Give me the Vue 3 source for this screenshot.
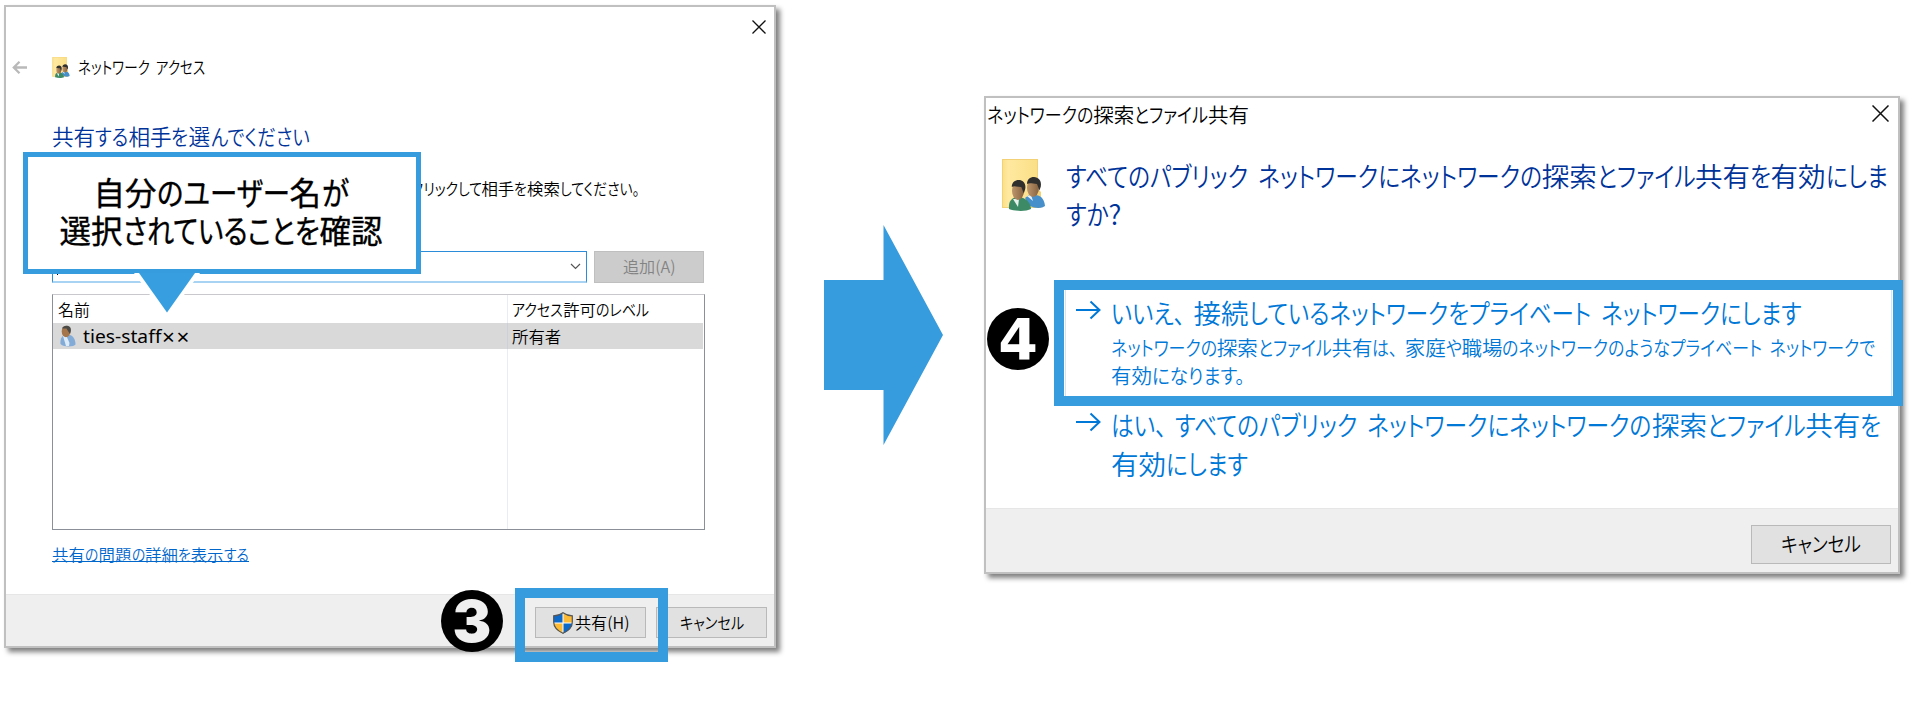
<script setup>
import { defineComponent, h, ref, onMounted } from 'vue'

/* One line of Japanese UI text: kana runs are condensed so that the line takes `w` pixels,
   while kanji keep their full width. */
const Line = defineComponent({
  props: { t: String, w: Number },
  setup(props) {
    const runs = props.t.match(/[\u3041-\u30ff\u3002 ]+\u3001?|[^\u3041-\u30ff\u3001\u3002 ]+/g) || []
    const isKana = (s) => /[\u3041-\u30ff\u3001\u3002 ]/.test(s[0])
    const root = ref(null)
    const sizes = ref([])
    onMounted(() => {
      const widths = [...root.value.querySelectorAll('.ink')].map((e) => e.offsetWidth)
      let kana = 0
      let other = 0
      runs.forEach((r, i) => (isKana(r) ? (kana += widths[i]) : (other += widths[i])))
      const k = kana ? (props.w - other) / kana : 1
      const o = kana ? 1 : props.w / other
      sizes.value = runs.map((r, i) => {
        const s = isKana(r) ? k : o
        return { w: widths[i] * s, s }
      })
    })
    return () =>
      h('span', { class: 'line', ref: root }, runs.map((r, i) => {
        const z = sizes.value[i]
        return h('span', { class: 'run', style: z ? { width: z.w + 'px' } : {} }, [
          h('span', {
            class: ['ink', isKana(r) && 'kana', r.endsWith('\u3001') && 'comma'],
            style: z ? { transform: `scaleX(${z.s})` } : {},
          }, r),
        ])
      }))
  },
})
</script>

<template>
  <main class="stage">
    <section class="dialog access">
      <svg class="close" width="14" height="14" viewBox="0 0 14 14"><path d="M.5 .5l13 13M13.5 .5l-13 13" stroke="#111" stroke-width="1.3" /></svg>
      <div class="nav">
        <svg width="15" height="13" viewBox="0 0 15 13"><path d="M15 6.5H2M7.500 .8L1.800 6.500l5.700 5.700" fill="none" stroke="#b9b9b9" stroke-width="2.300" /></svg>
        <svg class="folder" width="18" height="21" viewBox="0 0 43 52"><use href="#people" /></svg>
        <Line t="ネットワーク アクセス" :w="127" />
      </div>
      <h1><Line t="共有する相手を選んでください" :w="257" /></h1>
      <p class="hint"><Line t="クリックして相手を検索してください。" :w="229" /></p>
      <div class="entry">
        <div class="combo">
          <i class="caret"></i>
          <svg width="11" height="7" viewBox="0 0 11 7"><path d="M1 1l4.5 4.5L10 1" fill="none" stroke="#555" stroke-width="1.2" /></svg>
        </div>
        <div class="btn add"><Line t="追加(A)" :w="53" /></div>
      </div>
      <div class="list">
        <div class="row head"><span class="name"><Line t="名前" :w="32" /></span><span class="level"><Line t="アクセス許可のレベル" :w="137" /></span></div>
        <div class="row user">
          <span class="name">
            <svg class="avatar" width="16" height="22" viewBox="0 0 16 22">
              <path d="M0.5 19C0 13.500 2 10.500 5.500 10h4.500c3.500 1 5.500 5 5.500 9.500-1.500 2.500-11.500 3-15-.5z" fill="#83abd8" />
              <path d="M3 11l3-1 3.500 8L9 21H6z" fill="#dcebf7" />
              <ellipse cx="6" cy="6.500" rx="4.300" ry="5.700" fill="#a5764c" />
              <path d="M2 3.500C3 .3 8 .2 10 2c1.500 2 1 4.500 0 7L8 6 6.500 3.600z" fill="#4b4a46" />
            </svg>
            <span class="latin"><Line t="ties-staff" :w="78" /></span><span class="marks">××</span>
          </span>
          <span class="level"><Line t="所有者" :w="49" /></span>
        </div>
        <div class="row rest"><span class="name"></span><span class="level"></span></div>
      </div>
      <a class="link"><Line t="共有の問題の詳細を表示する" :w="197" /></a>
      <footer>
        <div class="btn share">
          <svg width="20" height="22" viewBox="0 0 20 22">
            <path d="M10 .5C7 2.700 4 3.500.7 3.600V10c0 5 4.300 9 9.300 11.500z" fill="#0d69c9" />
            <path d="M10 .5c3 2.200 6 3 9.300 3.100V10c0 5-4.300 9-9.300 11.500z" fill="#fdbb35" />
            <path d="M.7 11H10v10.500C5 19.500 1.200 16 .7 11z" fill="#fdbb35" />
            <path d="M10 11h9.300c-.5 5-4.300 8.500-9.300 10.500z" fill="#0d69c9" />
            <path d="M10 1v20M1 11h18" stroke="#fff" stroke-width="1" />
            <path d="M10 .7C7 2.900 4 3.700.7 3.800V10c0 5 4.300 9 9.300 11.300 5-2.300 9.300-6.300 9.300-11.300V3.800C16 3.700 13 2.900 10 .7z" fill="none" stroke="#555" stroke-width="1.200" />
          </svg>
          <Line t="共有(H)" :w="54" />
        </div>
        <div class="btn"><Line t="キャンセル" :w="64" /></div>
      </footer>
    </section>

    <svg class="big-arrow" width="119" height="220" viewBox="0 0 119 220"><path d="M0 55h59.500V0L119 110 59.500 220V165H0z" fill="#379cdd" /></svg>

    <section class="dialog discovery">
      <header>
        <Line t="ネットワークの探索とファイル共有" :w="262" />
        <svg width="17" height="17" viewBox="0 0 17 17"><path d="M.5 .5l16 16M16.500 .5l-16 16" stroke="#111" stroke-width="1.500" /></svg>
      </header>
      <div class="question">
        <svg width="43" height="52" viewBox="0 0 43 52">
          <defs>
            <linearGradient id="paper" x1="0" x2="1"><stop offset="0" stop-color="#fbe08a" /><stop offset=".15" stop-color="#ffe9a0" /><stop offset="1" stop-color="#fbdf87" /></linearGradient>
            <linearGradient id="skin" x1="0" x2="1"><stop offset="0" stop-color="#bd966d" /><stop offset="1" stop-color="#87623f" /></linearGradient>
            <g id="people">
              <path d="M0 0h36v30l3 3v16H0z" fill="#f3d277" />
              <path d="M1 1h34v47H1z" fill="url(#paper)" />
              <path d="M23 39c3-3 6-4 11-3 6 1 8.500 5 9 11-3 2.500-10 2.500-15 0z" fill="#468fca" />
              <path d="M25 37l4-1 2 6z" fill="#e8f1f7" />
              <ellipse cx="31" cy="29" rx="6" ry="9" fill="url(#skin)" />
              <path d="M25 25c0-4.500 3-7 7-7s8 3.500 6.800 9.500l-1.300 4-2.500-6.500c-4 0-7-1.500-10 0z" fill="#302f2e" />
              <path d="M7 50c-.5-7 1.500-10 6-11.500h6C25 39.500 28.500 44 29 50c-5 2.500-15 2.500-22 0z" fill="#3c8b66" />
              <path d="M11 40l6 0-1 8z" fill="#e8f1ec" />
              <ellipse cx="16" cy="32" rx="6" ry="9" fill="url(#skin)" />
              <path d="M9.800 28c0-4.500 3-7 7-7s7.800 3.500 6.300 9.500l-1.300 4-2.500-6.500c-4 0-7-1.500-9.500 0z" fill="#302f2e" />
            </g>
          </defs>
          <use href="#people" />
        </svg>
        <h2><Line t="すべてのパブリック ネットワークにネットワークの探索とファイル共有を有効にしま" :w="822" /><Line t="すか?" :w="56" /></h2>
      </div>
      <div class="option first">
        <svg width="25" height="20" viewBox="0 0 25 20"><path d="M0 10h23M14.500 1.500L23.500 10l-9 8.500" fill="none" stroke="#0078d7" stroke-width="2" /></svg>
        <div>
          <div class="answer"><Line t="いいえ、接続しているネットワークをプライベート ネットワークにします" :w="690" /></div>
          <div class="detail"><Line t="ネットワークの探索とファイル共有は、家庭や職場のネットワークのようなプライベート ネットワークで" :w="764.5" /><Line t="有効になります。" :w="134" /></div>
        </div>
      </div>
      <div class="option second">
        <svg width="25" height="20" viewBox="0 0 25 20"><path d="M0 10h23M14.500 1.500L23.500 10l-9 8.500" fill="none" stroke="#0078d7" stroke-width="2" /></svg>
        <div class="answer"><Line t="はい、すべてのパブリック ネットワークにネットワークの探索とファイル共有を" :w="770" /><Line t="有効にします" :w="137" /></div>
      </div>
      <footer><div class="btn"><Line t="キャンセル" :w="80" /></div></footer>
    </section>

    <div class="callout">
      <Line t="自分のユーザー名が" :w="255" />
      <Line t="選択されていることを確認" :w="323" />
      <svg class="tail" width="68" height="46" viewBox="0 0 68 46"><path d="M1 0h66L38 40H30z" fill="#fff" /><path d="M6 0h56L34 39.500z" fill="#379fe0" /></svg>
    </div>
    <div class="frame share-frame"></div>
    <div class="frame option-frame"></div>
    <div class="badge three"><b>3</b></div>
    <div class="badge four"><b>4</b></div>
  </main>
</template>

<style>
body { background: #fff; }
.line { display: block; white-space: pre; }
.line .run { display: inline-block; }
.line .ink { display: inline-block; transform-origin: 0 50%; }
.line .kana { font-feature-settings: "palt"; word-spacing: .22em; }
.line .comma { padding-right: .38em; }
</style>

<style scoped>
.stage {
  position: relative;
  display: flex;
  align-items: flex-start;
  width: 1912px;
  height: 704px;
  overflow: hidden;
  background: #fff;
  color: #000;
  font-family: "Noto Sans CJK JP", sans-serif;
  font-weight: 350;
}
h1, h2, p { margin: 0; font-weight: 350; }
svg { display: block; flex: none; }
.line { position: relative; top: -.056em; }
.dialog {
  box-sizing: border-box;
  flex: none;
  display: flex;
  flex-direction: column;
  align-items: flex-start;
  border: 2px solid #c0c0c0;
  background: #fff;
  box-shadow: 4px 4px 5px #808080;
}
footer {
  box-sizing: border-box;
  align-self: stretch;
  margin-top: auto;
  display: flex;
  justify-content: flex-end;
  background: #efefef;
  border-top: 1px solid #e6e6e6;
}
.btn {
  box-sizing: border-box;
  display: flex;
  align-items: center;
  justify-content: center;
  background: #e1e1e1;
  border: 1px solid #b9b9b9;
}

.access { width: 772px; height: 643px; margin: 5px 0 0 4px; font-size: 16.4px; line-height: 22px; }
.close { align-self: flex-end; margin: 13px 8px 0 0; }
.nav { display: flex; align-items: center; height: 22px; margin-top: 22px; padding-left: 6px; font-size: 17px; }
.nav .line { top: 0; }
.folder { margin: 0 8px 0 25px; }
h1 { margin: 44px 0 0 46px; font-size: 21.6px; line-height: 30px; color: #003399; }
.hint { margin: 25px 0 0 404.500px; line-height: 24px; }
.entry { display: flex; gap: 7px; margin: 50px 0 0 46px; }
.combo {
  box-sizing: border-box;
  display: flex;
  align-items: center;
  justify-content: space-between;
  width: 535px;
  height: 32px;
  padding: 0 5px 0 4px;
  border: 1px solid #2b8dd9;
  border-bottom: 2px solid #a9d3f2;
}
.caret { width: 1px; height: 17px; background: #000; }
.add { width: 110px; height: 32px; background: #ccc; border-color: #bfbfbf; color: #838383; }
.list {
  box-sizing: border-box;
  display: flex;
  flex-direction: column;
  width: 653px;
  height: 236px;
  margin: 11px 0 0 46px;
  border: 1px solid #8a8f98;
  border-top-color: #c8c8cd;
}
.row { display: flex; align-items: stretch; }
.row > span { display: flex; align-items: center; }
.name { box-sizing: border-box; width: 455px; padding-left: 5px; border-right: 1px solid #e9edf3; }
.level { padding-left: 4px; }
.head { height: 28px; }
.head > span { padding-top: 1px; }
.user { height: 26px; margin-right: 1px; background: #d9d9d9; }
.user .name { border-color: #cdd0d6; padding-left: 7px; }
.user .level { padding-top: 2px; }
.rest { flex: 1; }
.latin { margin: 3px 0 0 7px; font: 400 18.5px/26px "Noto Sans", sans-serif; }
.marks { margin: 2px 0 0 1px; font: 400 22.500px/26px "Noto Sans", sans-serif; letter-spacing: 1.700px; }
.link { margin: 14px 0 0 46px; color: #0066cc; }
.link > * { border-bottom: 1px solid #0066cc; height: 18px; line-height: 22px; }
.access footer { height: 52px; padding: 12px 7px 0 0; gap: 10px; }
.access footer .btn { width: 111px; height: 31px; }
.share { gap: 2px; }

.big-arrow { margin: 225px 0 0 48px; }

.discovery { width: 916px; height: 478px; margin: 96px 0 0 41px; font-size: 20.5px; line-height: 28px; }
header { align-self: stretch; display: flex; align-items: flex-start; justify-content: space-between; padding: 3px 9px 0 1px; }
header svg { margin-top: 4px; }
.question { display: flex; margin-top: 29px; padding-left: 16px; gap: 20.500px; }
.question svg { margin-top: 1px; }
h2 { font-size: 27.5px; line-height: 38px; color: #003399; }
.option { box-sizing: border-box; display: flex; width: 827px; margin-left: 79px; padding-left: 10px; gap: 10px; color: #0078d7; border: 1px solid transparent; }
.first { height: 116px; margin-top: 51px; padding-top: 9px; border-color: #d3e5f5; }
.first svg { margin-top: 5px; }
.second { margin-top: 5px; }
.second svg { margin-top: 5px; }
.answer { font-size: 27.5px; line-height: 39px; }
.discovery footer { height: 64px; padding: 16px 7px 0 0; }
.discovery footer .btn { width: 140px; height: 39px; }

.callout {
  position: absolute;
  left: 23px;
  top: 152px;
  box-sizing: border-box;
  width: 398px;
  height: 122px;
  padding-top: 17px;
  padding-right: 2px;
  display: flex;
  flex-direction: column;
  align-items: center;
  border: 5px solid #379cdd;
  background: #fff;
  font-size: 31.5px;
  line-height: 38px;
  font-weight: 400;
  -webkit-text-stroke: .35px #000;
}
.tail { position: absolute; left: 105px; top: 116px; }
.frame { position: absolute; box-sizing: border-box; border: 10px solid #379cdd; }
.share-frame { left: 515px; top: 588px; width: 153px; height: 74px; }
.option-frame { left: 1054px; top: 280px; width: 849px; height: 126px; }
.badge {
  position: absolute;
  box-sizing: border-box;
  width: 62px;
  height: 62px;
  border-radius: 50%;
  background: #000;
  color: #fff;
  display: flex;
  align-items: center;
  justify-content: center;
  font: 900 58px/62px Inter, sans-serif;
}
.three { left: 441px; top: 590px; color: #efefef; }
.three b { font-weight: 900; }
.four { left: 987px; top: 308px; padding-top: 2px; font: 700 57px/60px "DejaVu Sans", sans-serif; }
.four b { font-weight: 700; }
</style>
